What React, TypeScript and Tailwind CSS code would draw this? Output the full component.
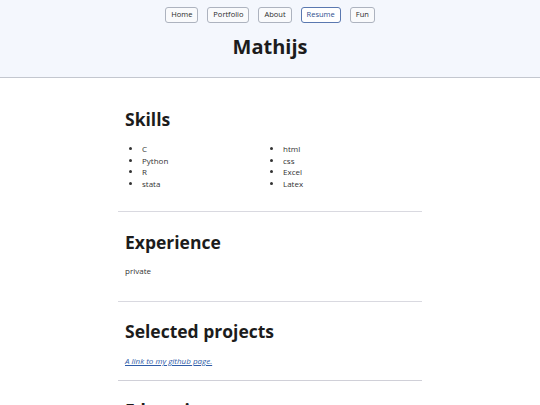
import React from "react";

const font = { fontFamily: '"Open Sans", "Noto Sans", sans-serif' };

function NavButton({ label, active }: { label: string; active?: boolean }) {
  return (
    <button
      className={
        active
          ? "h-[16px] px-[5px] rounded-[3px] border border-[#5a78b0] bg-white text-[#2d4f8f] text-[7.5px] leading-none"
          : "h-[16px] px-[5px] rounded-[3px] border border-[#adb3bf] bg-[#f9fafc] text-[#2a2a2a] text-[7.5px] leading-none"
      }
    >
      {label}
    </button>
  );
}

export default function App() {
  return (
    <div className="h-[405px] overflow-hidden bg-white text-[#222]" style={font}>
      <header className="bg-[#f4f7fd] border-b border-[#c3c7cf] h-[78px] flex flex-col items-center pt-[7px]">
        <nav className="flex gap-[9px]">
          <NavButton label="Home" />
          <NavButton label="Portfolio" />
          <NavButton label="About" />
          <NavButton label="Resume" active />
          <NavButton label="Fun" />
        </nav>
        <h1 className="mt-[10px] text-[20px] font-bold leading-[28px] text-[#1c1c1c]">Mathijs</h1>
      </header>

      <main className="w-[304px] mx-auto">
        <section className="px-[7px] pt-[28px] pb-[21px] border-b border-[#d9d9e0]">
          <h2 className="text-[17.5px] font-bold leading-[26px] text-[#1c1c1c]">Skills</h2>
          <div className="grid grid-cols-[141px_1fr] mt-[11px]">
            <ul className="list-disc pl-[17px] text-[8px] leading-[11.7px] text-[#333]">
              <li>C</li>
              <li>Python</li>
              <li>R</li>
              <li>stata</li>
            </ul>
            <ul className="list-disc pl-[17px] text-[8px] leading-[11.7px] text-[#333]">
              <li>html</li>
              <li>css</li>
              <li>Excel</li>
              <li>Latex</li>
            </ul>
          </div>
        </section>

        <section className="px-[7px] pt-[17px] pb-[24px] border-b border-[#d9d9e0]">
          <h2 className="text-[17.5px] font-bold leading-[26px] text-[#1c1c1c]">Experience</h2>
          <p className="mt-[10px] text-[8px] leading-[12px] text-[#333]">private</p>
        </section>

        <section className="px-[7px] pt-[16px] pb-[13px] border-b border-[#d0d0d8]">
          <h2 className="text-[17.5px] font-bold leading-[26px] text-[#1c1c1c]">Selected projects</h2>
          <p className="mt-[11px] text-[8px] leading-[12px]">
            <a href="#" className="italic underline text-[#2f5ca8]">A link to my github page.</a>
          </p>
        </section>

        <section className="px-[7px] pt-[16px]">
          <h2 className="text-[17.5px] font-bold leading-[26px] text-[#1c1c1c]">Education</h2>
        </section>
      </main>
    </div>
  );
}
